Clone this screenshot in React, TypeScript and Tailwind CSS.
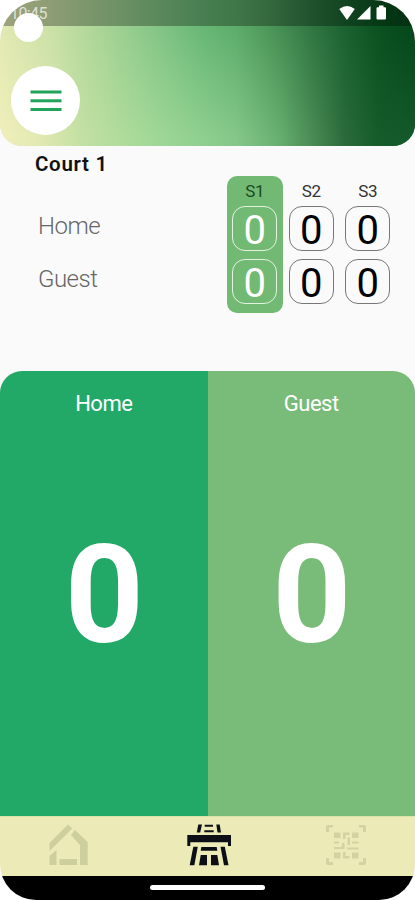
const sets = [
  { id: "S1", home: 0, guest: 0 },
  { id: "S2", home: 0, guest: 0 },
  { id: "S3", home: 0, guest: 0 },
];

const activeSet = "S1";

function StatusBar() {
  return (
    <div className="relative flex h-[26px] w-full items-start justify-between bg-black/30 pl-[10px] pr-[27px] pt-[5px]">
      <span className="text-[16px] leading-[18px] tracking-[-0.6px] text-white/70">
        10:45
      </span>
      <svg width="50" height="16" viewBox="0 0 50 16" fill="white">
        <path d="M1.3 4Q9 -2 16.8 4L9 15Z" />
        <path d="M32.5 1V14.5H19Z" />
        <path d="M38.5 3.2Q38.5 2.2 39.5 2.2H41V.5h4.500v1.700H47q1 0 1 1V13.500q0 1-1 1H39.500q-1 0-1-1Z" />
      </svg>
      {/* Camera cutout */}
      <div className="absolute left-[14px] top-[13px] size-[29px] rounded-full bg-white" />
    </div>
  );
}

function Header() {
  return (
    <header className="relative h-[146px] overflow-hidden rounded-b-[22px]">
      <div className="absolute inset-0 bg-[linear-gradient(90deg,#e2e9b2_0%,#cbe1a8_12%,#a4d394_26%,#80c384_39%,#66b674_49%,#5bab69_57%,#4b9558_65%,#307642_75%,#18602f_84%,#09501f_92%,#04461a_100%)]" />
      <div className="absolute inset-0 bg-[linear-gradient(90deg,#f0efbb_0%,#e3e9b2_9%,#c2e0a2_20%,#a4d998_35%,#90d090_48%,#84c788_57%,#68b071_67%,#4b8c55_75%,#2b6b3b_83%,#165b2b_91%,#14592a_100%)] [mask-image:linear-gradient(180deg,transparent_15%,black_95%)]" />
      <div className="relative flex flex-col">
        <StatusBar />
        <button className="ml-[11px] mt-[40px] flex size-[69px] items-center justify-center rounded-full bg-white">
          <svg width="32" height="24" viewBox="0 0 32 24" fill="#22a35a">
            <rect x=".5" y="1.500" width="31" height="3" />
            <rect x=".5" y="10.300" width="31" height="3" />
            <rect x=".5" y="19" width="31" height="3" />
          </svg>
        </button>
      </div>
    </header>
  );
}

function SetCell({ value, active }: { value: number; active: boolean }) {
  return (
    <div
      className={`flex size-[45px] items-center justify-center rounded-[13px] border pt-[4px] text-[40px] leading-none ${
        active ? "border-white/80 text-white" : "border-[#777] text-black"
      }`}
    >
      {value}
    </div>
  );
}

function Summary() {
  return (
    <section className="flex h-[225px] justify-between pr-[19px]">
      <div className="flex flex-col pl-[35px] pt-[6px]">
        <h1 className="text-[20.5px] font-semibold leading-[25px] tracking-[0.7px] text-[#111]">
          Court 1
        </h1>
        <p className="ml-[3px] mt-[35px] text-[24px] font-light leading-[28px] tracking-[-0.5px] text-[#666]">
          Home
        </p>
        <p className="ml-[3px] mt-[25px] text-[24px] font-light leading-[28px] tracking-[-0.5px] text-[#666]">
          Guest
        </p>
      </div>
      <div className="flex pt-[30px]">
        {sets.map((set) => {
          const active = set.id === activeSet;
          return (
            <div
              key={set.id}
              className={`flex h-[137px] w-[56.5px] flex-col items-center rounded-[10px] ${
                active ? "bg-[#72b973]" : ""
              }`}
            >
              <span
                className={`mt-[5px] h-[25px] text-[17px] leading-[20px] tracking-[-0.3px] ${
                  active ? "text-[#1d4a22]" : "text-[#333]"
                }`}
              >
                {set.id}
              </span>
              <div className="flex flex-col gap-2">
                <SetCell value={set.home} active={active} />
                <SetCell value={set.guest} active={active} />
              </div>
            </div>
          );
        })}
      </div>
    </section>
  );
}

function ScorePanel({
  name,
  score,
  className,
}: {
  name: string;
  score: number;
  className: string;
}) {
  return (
    <button
      className={`flex flex-1 flex-col items-center pt-[20px] text-white ${className}`}
    >
      <span className="text-[22px] leading-[26px] tracking-[-0.5px]">
        {name}
      </span>
      <span className="ml-[1px] mt-[109px] text-[138px] font-bold leading-[138px]">
        {score}
      </span>
    </button>
  );
}

function HomeIcon() {
  return (
    <svg width="40" height="42" viewBox="0 0 40 42" fill="#cdcf9c">
      <path d="M19 .5L23.300 4.500 .5 27V19Z" />
      <path d="M26 6L38.700 18V41H31V21L22 11Z" />
      <path d="M.5 32L7.500 26V41H.5Z" />
      <path d="M10.500 35H28V41H10.500Z" />
    </svg>
  );
}

function CourtIcon() {
  return (
    <svg width="44" height="42" viewBox="0 0 44 42" fill="#0c1016">
      <path d="M11.300 .5H15L13.200 8.500H9.800Z" />
      <path d="M29.300 .5H32.700L34 8.500H30.500Z" />
      <path d="M17.700 .7H26V2.700H17.700Z" />
      <path d="M17.300 6.200H26.700V8.300H17.300Z" />
      <path d="M.3 11H44V22H41V18.300H3.300V22H.3Z" />
      <path d="M6.300 22.700H10.800L7.300 41.300H2.700Z" />
      <path d="M33.500 22.700H37.800L41.500 41.300H37Z" />
      <path d="M14.300 23H29.700L30.300 26.700H13.700Z" />
      <path d="M13.700 31H20V41.300H12Z" />
      <path d="M24 31H30.300L32 41.300H24Z" />
    </svg>
  );
}

function ScanIcon() {
  return (
    <svg width="42" height="42" viewBox="0 0 42 42" fill="#d2d3a1">
      <path d="M1 8V3Q1 1 3 1H8V3.500H4V8Z" />
      <path d="M34 1H39Q41 1 41 3V8H38V3.500H34Z" />
      <path d="M1 34H4V38H8V41H3Q1 41 1 39Z" />
      <path d="M38 34H41V39Q41 41 39 41H34V38H38Z" />
      <path d="M9 8.500H15.500V14H9Z" />
      <path d="M27 8.500H33.500V14H27Z" />
      <path d="M9 28.500H15.500V34.500H9Z" />
      <path d="M27 28.500H33.500V34.500H27Z" />
      <path d="M18 8.500H24.500V11H20.500V15H18Z" />
      <path d="M9 17.500H14V19.500H9Z" />
      <path d="M17 19H19.500V25H9V23H17Z" />
      <path d="M22.500 13.500H25V21H22.500Z" />
      <path d="M27 17.500H33.500V19.500H27Z" />
      <path d="M22 23.500H33.500V25.500H22Z" />
      <path d="M18 28H20.500V32H24.500V34.500H18Z" />
    </svg>
  );
}

function BottomNav() {
  return (
    <nav className="flex h-[60px] border-t border-[#d9e3a6] bg-[#ecebb7] pt-[7px]">
      <a className="flex flex-1 justify-center">
        <HomeIcon />
      </a>
      <a className="flex flex-1 justify-center pl-[3px]">
        <CourtIcon />
      </a>
      <a className="flex flex-1 justify-center">
        <ScanIcon />
      </a>
    </nav>
  );
}

export default function App() {
  return (
    <div className="h-[900px] w-[415px] bg-white">
      <main className="flex h-full flex-col overflow-hidden rounded-t-[42px] rounded-b-[36px] bg-[#fafafa] font-[Roboto,sans-serif]">
        <Header />
        <Summary />
        <section className="flex flex-1 overflow-hidden rounded-t-[22px]">
          <ScorePanel name="Home" score={0} className="bg-[#22a968]" />
          <ScorePanel name="Guest" score={0} className="bg-[#79bb79]" />
        </section>
        <BottomNav />
        <div className="flex h-[24px] justify-center bg-black pt-[9px]">
          <div className="h-[5px] w-[115px] rounded-full bg-white" />
        </div>
      </main>
    </div>
  );
}
